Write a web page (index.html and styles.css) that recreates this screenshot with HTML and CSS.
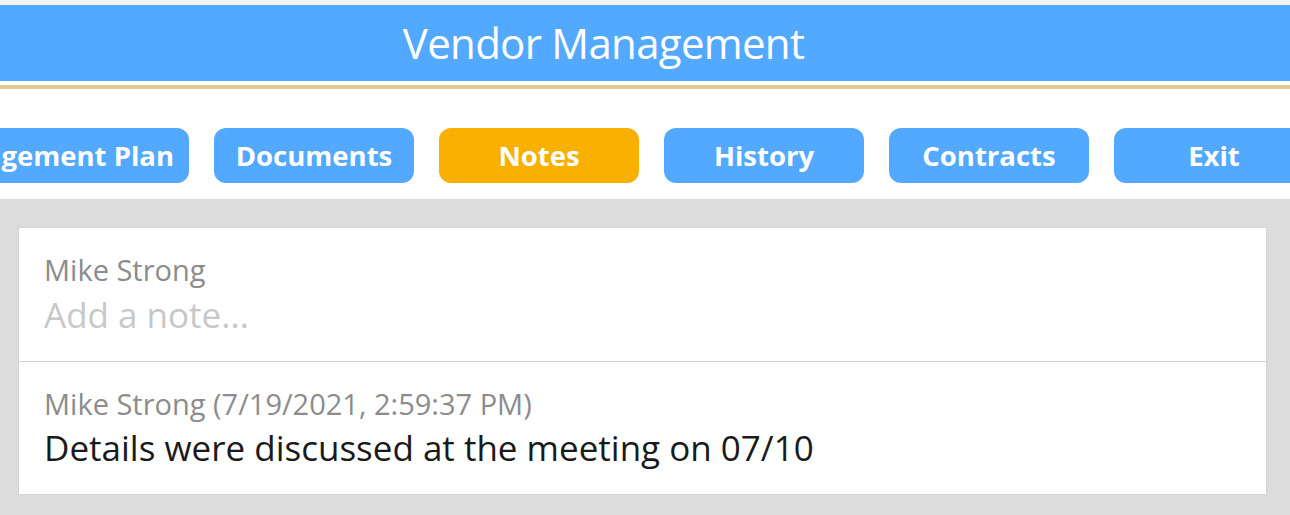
FILE: index.html
```html
<!DOCTYPE html>
<html lang="en">
<head>
        <meta charset="UTF-8" />
        <meta name="viewport" content="width=device-width, initial-scale=1" />
        <title>Vendor Management - Notes</title>
        <link rel="stylesheet" href="styles.css">
</head>
<body>

<header>
        <h1>Vendor Management</h1>
</header>

<nav>
        <ul>
                <li><a href="#">Management Plan</a></li>
                <li><a href="#">Documents</a></li>
                <li><a href="#" class="active">Notes</a></li>
                <li><a href="#">History</a></li>
                <li><a href="#">Contracts</a></li>
                <li><a href="#">Exit</a></li>
        </ul>
</nav>

<main>
        <div class="notes">
                <div class="note new-note">
                        <div class="author">Mike Strong</div>
                        <input type="text" class="note-input" placeholder="Add a note...">
                </div>
                <div class="note">
                        <div class="author">Mike Strong (7/19/2021, 2:59:37 PM)</div>
                        <div class="note-text">Details were discussed at the meeting on 07/10</div>
                </div>
        </div>
</main>

</body>
</html>
```

FILE: styles.css
```css
html, body {
        height: 100%;
}

body {
        margin: 0;
        font-family: 'Open Sans', 'Noto Sans', sans-serif;
        background: #dcdcdc;
        color: #1a1a1a;
        overflow: hidden;
        display: flex;
        flex-direction: column;
}

header {
        background: #52a9ff;
        border-top: 5px solid #f2f2f2;
        border-bottom: 4px solid white;
        box-shadow: 0 4px 0 #e2c78f;
        margin-bottom: 4px;
}

header h1 {
        margin: 0;
        height: 76px;
        line-height: 76px;
        padding-right: 83px;
        text-align: center;
        color: white;
        font-weight: 400;
        font-size: 42px;
        letter-spacing: -0.7px;
}

nav {
        background: white;
        padding: 39px 0 16px;
        overflow: hidden;
}

nav ul {
        list-style: none;
        display: flex;
        justify-content: flex-end;
        gap: 25px;
        margin: 0 -24px 0 0;
        padding: 0;
}

nav li {
        flex-shrink: 0;
}

nav a {
        display: block;
        min-width: 200px;
        box-sizing: border-box;
        padding: 0 15px;
        height: 55px;
        line-height: 55px;
        border-radius: 12px;
        background: #52a9ff;
        color: white;
        font-weight: 700;
        font-size: 27.5px;
        text-align: center;
        text-decoration: none;
        white-space: nowrap;
}

nav a.active {
        background: #f9b000;
}

main {
        flex: 1;
        padding: 28px 23px 0 18px;
}

.notes {
        background: white;
        border: 1px solid #d4d4d4;
}

.note {
        padding: 24px 25px 24px;
        border-top: 1px solid #d0d0d0;
}

.note:first-child {
        border-top: none;
}

.author {
        color: #8c8c8c;
        font-size: 29px;
        line-height: 36px;
}

.note-input {
        display: block;
        width: 100%;
        border: none;
        outline: none;
        padding: 0;
        margin: 5px 0 0;
        font-family: inherit;
        font-size: 35px;
        color: #1a1a1a;
        line-height: 44px;
        height: 44px;
}

.note-input::placeholder {
        color: #c8c8c8;
}

.note-text {
        margin-top: 4px;
        font-size: 35px;
        line-height: 44px;
}
```
